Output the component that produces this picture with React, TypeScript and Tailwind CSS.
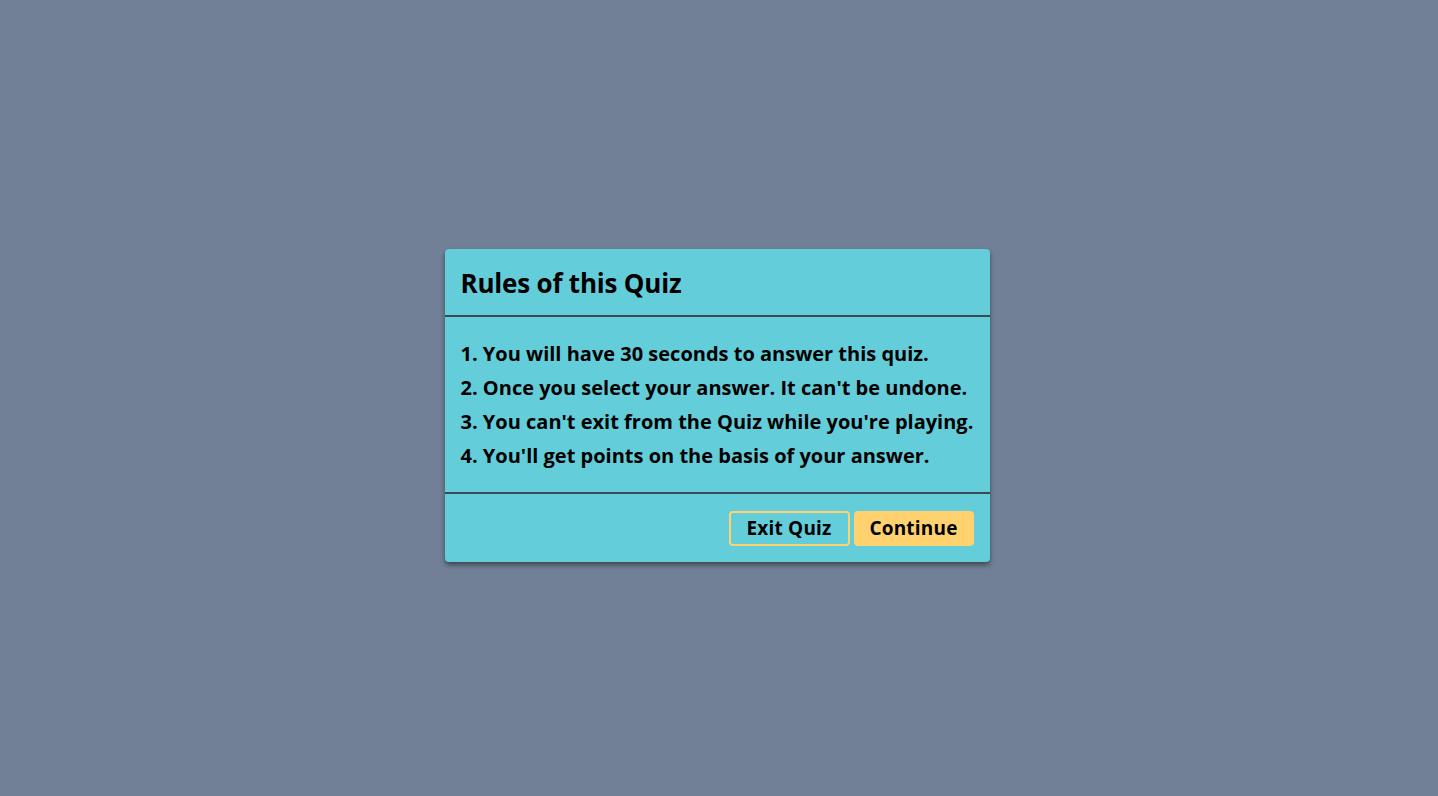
export default function App() {
  const rules = [
    "1. You will have 30 seconds to answer this quiz.",
    "2. Once you select your answer. It can't be undone.",
    "3. You can't exit from the Quiz while you're playing.",
    "4. You'll get points on the basis of your answer.",
  ];

  return (
    <div className="min-h-screen w-full bg-[#718096] flex items-center justify-center pt-[15px] pr-[4px] font-['Open_Sans',sans-serif] text-black">
      <div className="w-[545px] bg-[#63cdda] rounded-[4px] shadow-[0_3px_5px_rgba(0,0,0,0.45)]">
        <div className="h-[68px] px-4 pt-[2px] flex items-center border-b-2 border-[#3c4a55]">
          <h1 className="text-[26px] font-bold tracking-[-0.2px]">Rules of this Quiz</h1>
        </div>

        <div className="px-4 pt-[20px] pb-[19px] border-b-2 border-[#3c4a55]">
          {rules.map(rule => (
            <div key={rule} className="h-[34px] flex items-center text-[20px] font-bold whitespace-nowrap">
              {rule}
            </div>
          ))}
        </div>

        <div className="h-[68px] px-4 flex items-center justify-end gap-1">
          <button className="w-[121px] h-[35px] rounded-[4px] border-2 border-[#ffd26f] text-[19px] font-bold tracking-[0.2px]">
            Exit Quiz
          </button>
          <button className="w-[120px] h-[35px] rounded-[4px] bg-[#ffd26f] text-[19px] font-bold tracking-[0.2px]">
            Continue
          </button>
        </div>
      </div>
    </div>
  );
}
